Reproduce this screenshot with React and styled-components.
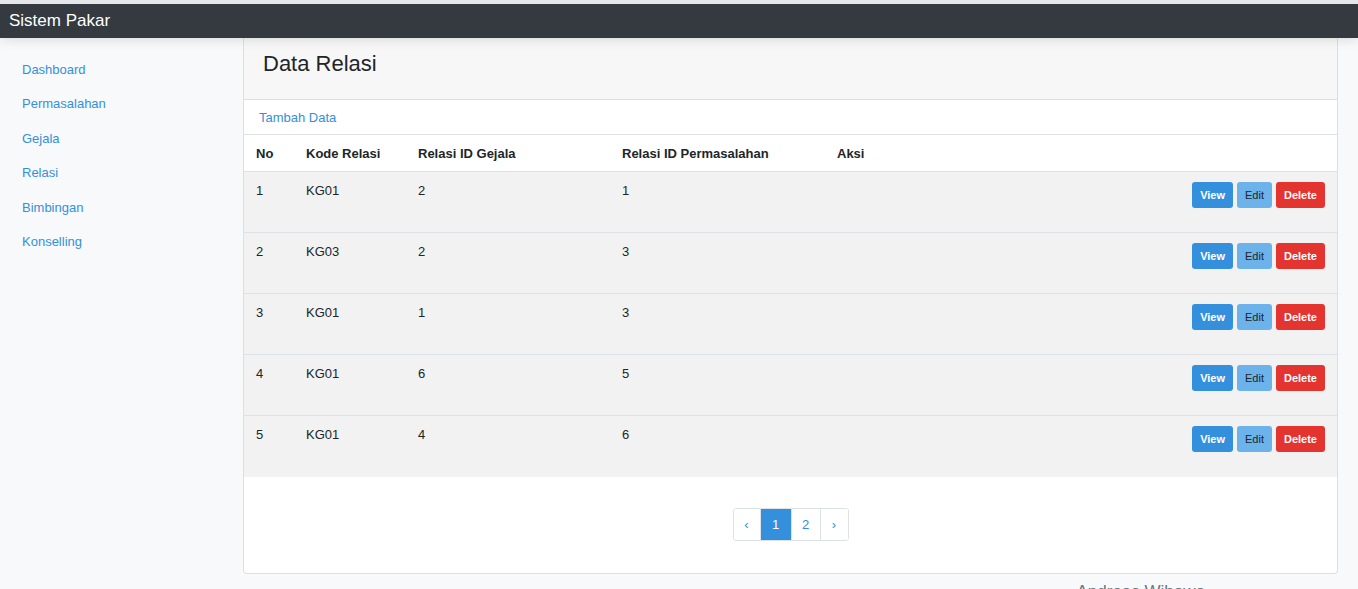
import styled, { createGlobalStyle } from "styled-components";

const GlobalStyle = createGlobalStyle`
  html, body {
    margin: 0;
    padding: 0;
    background: #f8f9fb;
    font-family: "Liberation Sans", Arial, sans-serif;
    color: #212529;
    overflow: hidden;
  }
  body {
    border-top: 4px solid #e4e6e9;
  }
`;

const rows = [
  { no: 1, kode: "KG01", gejala: 2, masalah: 1 },
  { no: 2, kode: "KG03", gejala: 2, masalah: 3 },
  { no: 3, kode: "KG01", gejala: 1, masalah: 3 },
  { no: 4, kode: "KG01", gejala: 6, masalah: 5 },
  { no: 5, kode: "KG01", gejala: 4, masalah: 6 },
];

const menu = ["Dashboard", "Permasalahan", "Gejala", "Relasi", "Bimbingan", "Konselling"];

export default function App() {
  return (
    <>
      <GlobalStyle />
      <Navbar>
        <Brand>Sistem Pakar</Brand>
      </Navbar>
      <Layout>
        <Sidebar>
          {menu.map((m) => (
            <SideLink key={m}>{m}</SideLink>
          ))}
        </Sidebar>
        <Main>
          <Card>
            <CardHeader>Data Relasi</CardHeader>
            <ToolRow>
              <TextLink>Tambah Data</TextLink>
            </ToolRow>
            <Table>
              <colgroup>
                <col style={{ width: 50 }} />
                <col style={{ width: 112 }} />
                <col style={{ width: 204 }} />
                <col style={{ width: 215 }} />
                <col />
              </colgroup>
              <thead>
                <tr>
                  <Th>No</Th>
                  <Th>Kode Relasi</Th>
                  <Th>Relasi ID Gejala</Th>
                  <Th>Relasi ID Permasalahan</Th>
                  <Th>Aksi</Th>
                </tr>
              </thead>
              <tbody>
                {rows.map((r) => (
                  <Tr key={r.no}>
                    <Td>{r.no}</Td>
                    <Td>{r.kode}</Td>
                    <Td>{r.gejala}</Td>
                    <Td>{r.masalah}</Td>
                    <ActionTd>
                      <Actions>
                        <Btn $bg="#3490dc" $color="#fff">View</Btn>
                        <Btn $bg="#6cb2eb" $color="#212529" $weight="normal">Edit</Btn>
                        <Btn $bg="#e3342f" $color="#fff">Delete</Btn>
                      </Actions>
                    </ActionTd>
                  </Tr>
                ))}
              </tbody>
            </Table>
            <PagerWrap>
              <Pager>
                <PageItem $w={26}>‹</PageItem>
                <PageItem $w={31} $active>1</PageItem>
                <PageItem $w={29}>2</PageItem>
                <PageItem $w={28}>›</PageItem>
              </Pager>
            </PagerWrap>
          </Card>
          <Footer>Andreas Wibowo</Footer>
        </Main>
      </Layout>
    </>
  );
}

const Navbar = styled.div`
  height: 34px;
  background: #343a40;
  display: flex;
  align-items: center;
  padding: 0 9px;
  box-shadow: 0 2px 12px rgba(0, 0, 0, 0.12);
  position: relative;
  z-index: 2;
`;

const Brand = styled.div`
  color: #fff;
  font-size: 17px;
`;

const Layout = styled.div`
  display: flex;
`;

const Sidebar = styled.nav`
  width: 243px;
  flex-shrink: 0;
  padding-top: 23px;
  display: flex;
  flex-direction: column;
`;

const SideLink = styled.a`
  color: #3490dc;
  font-size: 13px;
  padding: 0 22px;
  height: 34.4px;
  line-height: 18px;
`;

const Main = styled.div`
  width: 1095px;
`;

const Card = styled.div`
  background: #fff;
  border: 1px solid #dfdfdf;
  border-top: none;
  border-radius: 0 0 4px 4px;
  padding-bottom: 32px;
`;

const CardHeader = styled.div`
  height: 62px;
  background: #f7f7f7;
  border-bottom: 1px solid #dfdfdf;
  padding: 12px 19px 0;
  box-sizing: border-box;
  font-size: 22px;
  line-height: 28px;
  color: #212529;
`;

const ToolRow = styled.div`
  height: 34px;
  border-bottom: 1px solid #dee2e6;
  padding: 0 15px;
  display: flex;
  align-items: center;
`;

const TextLink = styled.a`
  color: #3490dc;
  font-size: 13px;
`;

const Table = styled.table`
  width: 100%;
  border-collapse: collapse;
  table-layout: fixed;
  font-size: 13px;
`;

const Th = styled.th`
  text-align: left;
  font-weight: bold;
  height: 36px;
  padding: 0 12px;
  border-bottom: 1px solid #dee2e6;
  vertical-align: middle;
`;

const Tr = styled.tr`
  background: #f2f2f2;
  height: 61px;
  & + & td {
    border-top: 1px solid #dee2e6;
  }
`;

const Td = styled.td`
  padding: 9px 12px 0;
  vertical-align: top;
  line-height: 19px;
`;

const ActionTd = styled.td`
  padding: 10px 12px 0;
  vertical-align: top;
`;

const Actions = styled.div`
  display: flex;
  justify-content: flex-end;
  gap: 4px;
`;

const Btn = styled.button`
  background: ${(p) => p.$bg};
  color: ${(p) => p.$color};
  font-weight: ${(p) => p.$weight || "bold"};
  font-family: "Liberation Sans", Arial, sans-serif;
  font-size: 11px;
  border: none;
  border-radius: 3px;
  height: 26px;
  padding: 0 8px;
`;

const PagerWrap = styled.div`
  display: flex;
  justify-content: center;
  padding-top: 31px;
`;

const Pager = styled.div`
  display: flex;
  border: 1px solid #dee2e6;
  border-radius: 3px;
  overflow: hidden;
`;

const PageItem = styled.span`
  height: 31px;
  width: ${(p) => p.$w}px;
  box-sizing: border-box;
  display: flex;
  align-items: center;
  justify-content: center;
  font-size: 13px;
  color: ${(p) => (p.$active ? "#fff" : "#3490dc")};
  background: ${(p) => (p.$active ? "#3490dc" : "#fff")};
  & + & {
    border-left: 1px solid #dee2e6;
  }
`;

const Footer = styled.div`
  text-align: right;
  padding: 8px 133px 0 0;
  font-size: 17px;
  line-height: 20px;
  color: #6c757d;
`;
